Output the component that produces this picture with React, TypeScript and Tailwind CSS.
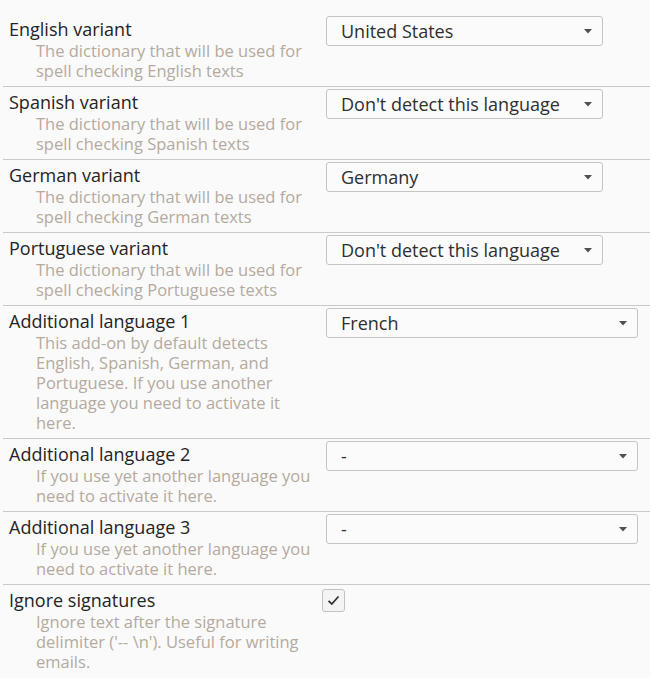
import React from 'react';

interface SettingRow {
  title: string;
  lines: string[];
  value?: string;
  wide?: boolean;
  checkbox?: boolean;
}

const rows: SettingRow[] = [
  {
    title: 'English variant',
    lines: ['The dictionary that will be used for', 'spell checking English texts'],
    value: 'United States',
  },
  {
    title: 'Spanish variant',
    lines: ['The dictionary that will be used for', 'spell checking Spanish texts'],
    value: "Don't detect this language",
  },
  {
    title: 'German variant',
    lines: ['The dictionary that will be used for', 'spell checking German texts'],
    value: 'Germany',
  },
  {
    title: 'Portuguese variant',
    lines: ['The dictionary that will be used for', 'spell checking Portuguese texts'],
    value: "Don't detect this language",
  },
  {
    title: 'Additional language 1',
    lines: [
      'This add-on by default detects',
      'English, Spanish, German, and',
      'Portuguese. If you use another',
      'language you need to activate it',
      'here.',
    ],
    value: 'French',
    wide: true,
  },
  {
    title: 'Additional language 2',
    lines: ['If you use yet another language you', 'need to activate it here.'],
    value: '-',
    wide: true,
  },
  {
    title: 'Additional language 3',
    lines: ['If you use yet another language you', 'need to activate it here.'],
    value: '-',
    wide: true,
  },
  {
    title: 'Ignore signatures',
    lines: ["Ignore text after the signature", "delimiter ('-- \\n'). Useful for writing", 'emails.'],
    checkbox: true,
  },
];

function Dropdown({ value, wide }: { value: string; wide?: boolean }) {
  return (
    <div
      className={`mt-[2px] h-[30px] flex items-center justify-between border border-[#c4c4c4] rounded-[3px] bg-[#fbfbfb] pl-[14px] pr-[10px] ${
        wide ? 'w-[312px]' : 'w-[277px]'
      }`}
    >
      <span className="text-[18px] text-[#2f2f2f] whitespace-nowrap">{value}</span>
      <svg width="8" height="5" viewBox="0 0 8 5">
        <path d="M0 0 L8 0 L4 4.5 Z" fill="#505050" />
      </svg>
    </div>
  );
}

function Checkbox() {
  return (
    <div className="mt-[4px] -ml-[4px] w-[23px] h-[23px] flex items-center justify-center border border-[#c2c2c2] rounded-[3px] bg-[#f4f4f4]">
      <svg width="13" height="11" viewBox="0 0 13 11">
        <path d="M1.5 5.8 L4.8 9 L11.5 1.5" fill="none" stroke="#333" strokeWidth="1.8" />
      </svg>
    </div>
  );
}

export default function App() {
  return (
    <div
      className="w-[650px] h-[678px] overflow-hidden bg-[#fafafa] pt-[14px] pl-[3px]"
      style={{ fontFamily: '"Open Sans", "Noto Sans", sans-serif' }}
    >
      {rows.map((row, index) => (
        <div
          key={row.title}
          className={`flex ${index > 0 ? 'border-t border-[#c9c9c9]' : ''}`}
        >
          {/* Label and description */}
          <div className="w-[323px] shrink-0 pt-[3px] pb-[5px] pl-[6px]">
            <div className="h-[24px] leading-[24px] text-[18px] text-[#242424] whitespace-nowrap">
              {row.title}
            </div>
            <div className="pl-[27px]">
              {row.lines.map((line) => (
                <div key={line} className="h-[20px] leading-[20px] text-[16.5px] text-[#b5aa9f] whitespace-nowrap">
                  {line}
                </div>
              ))}
            </div>
          </div>

          {/* Control */}
          <div className="flex-1">
            {row.checkbox ? <Checkbox /> : <Dropdown value={row.value ?? ''} wide={row.wide} />}
          </div>
        </div>
      ))}
    </div>
  );
}
